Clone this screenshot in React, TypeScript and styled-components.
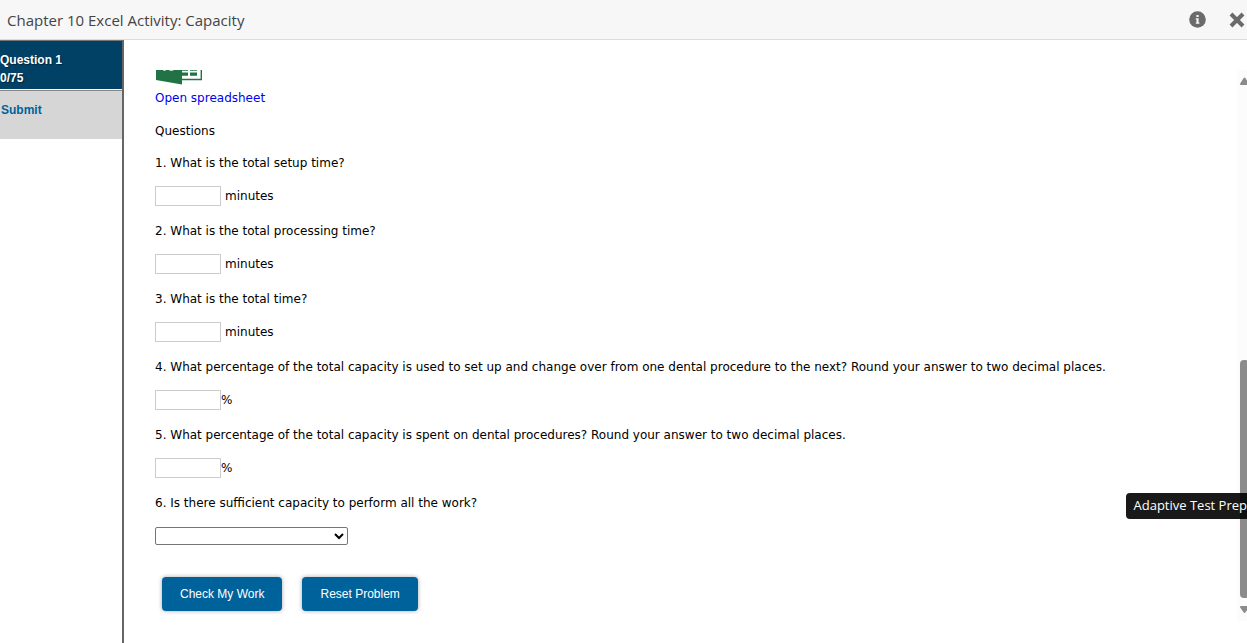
import React from "react";
import styled, { createGlobalStyle } from "styled-components";

const GlobalStyle = createGlobalStyle`
  *, *::before, *::after { box-sizing: border-box; }
  html, body, #root { height: 100%; }
  body { margin: 0; overflow: hidden; background: #fff; color: #000; }
`;

const Page = styled.div`
  display: flex;
  flex-direction: column;
  height: 100%;
  overflow: hidden;
`;

const TopBar = styled.header`
  display: flex;
  align-items: center;
  justify-content: space-between;
  height: 40px;
  flex: none;
  padding-left: 7px;
  padding-right: 2px;
  background: #f7f7f7;
  border-bottom: 1px solid #dcdcdc;
`;

const Title = styled.h1`
  margin: 0;
  font: 400 15px/20px "Open Sans", sans-serif;
  color: #444;
`;

const Tools = styled.div`
  display: flex;
  align-items: center;
  gap: 23px;
`;

const IconButton = styled.button`
  display: flex;
  padding: 0;
  border: 0;
  background: none;
  color: #6b6b6b;
`;

const Body = styled.div`
  display: flex;
  flex: 1;
  min-height: 0;
`;

const Sidebar = styled.nav`
  width: 124px;
  flex: none;
  border-right: 2px solid #666;
  font: 700 12px/18px "Liberation Sans", Arial, sans-serif;
`;

const QuestionItem = styled.a`
  display: block;
  height: 50px;
  padding-top: 10px;
  border-top: 1px solid #777;
  border-bottom: 1px solid #fff;
  background: #004165;
  color: #fff;
  text-decoration: none;
  text-shadow: 1px 1px 1px #00263c;
`;

const SubmitItem = styled.a`
  display: block;
  height: 49px;
  padding: 10px 1px;
  border-top: 1px solid #888;
  background: #d6d6d6;
  color: #00629b;
  text-decoration: none;
`;

const Main = styled.main`
  display: flex;
  flex: 1;
  min-width: 0;
  margin: 30px -5px 22px 0;
`;

const Content = styled.div`
  flex: 1;
  min-width: 0;
  padding-left: 31px;
  overflow: hidden;
  font: 400 12px/16px "DejaVu Sans", Verdana, sans-serif;
`;

const SheetLink = styled.a`
  display: block;
  width: max-content;
  color: #0000ee;
  text-decoration: none;

  svg { display: block; margin-bottom: 5px; }
`;

const Heading = styled.h2`
  margin: 17px 0 16px;
  font: inherit;
`;

const Question = styled.div`
  margin-bottom: 17px;
`;

const Prompt = styled.label`
  display: block;
  margin-bottom: 15px;
`;

const AnswerRow = styled.div<{ $gap?: number }>`
  display: flex;
  align-items: center;
  height: 20px;
  gap: ${(p) => p.$gap ?? 0}px;
`;

const AnswerInput = styled.input`
  width: 66px;
  height: 20px;
  padding: 1px 2px;
  border: 1px solid #ccc;
  background: #fff;
  font: inherit;
`;

const AnswerSelect = styled.select`
  width: 193px;
  height: 18px;
  border: 1px solid #767676;
  border-radius: 2px;
  background: #fff;
  font: inherit;
`;

const Actions = styled.div`
  display: flex;
  gap: 20px;
  margin: 31px 0 0 7px;
`;

const ActionButton = styled.button`
  height: 34px;
  padding: 0 18px;
  border: 0;
  border-radius: 4px;
  background: #00629b;
  color: #fff;
  font: 400 12px/16px "Liberation Sans", Arial, sans-serif;
  box-shadow: 0 0 4px rgba(0, 0, 0, 0.35);
`;

const ScrollTrack = styled.div`
  display: flex;
  flex-direction: column;
  align-items: center;
  width: 15px;
  flex: none;
  padding: 7px 0;
  background: #fcfcfc;
  color: #8b8b8b;
`;

const Thumb = styled.div`
  width: 9px;
  flex: 238;
  border-radius: 4px;
  background: #8b8b8b;
`;

const TrackSpace = styled.div<{ $grow: number }>`
  flex: ${(p) => p.$grow};
`;

const Tooltip = styled.div`
  position: absolute;
  right: 0;
  top: 493px;
  padding: 2px 0 4px 8px;
  border-radius: 4px 0 0 4px;
  background: rgba(0, 0, 0, 0.9);
  color: #fff;
  font: 400 13px/20px "Open Sans", sans-serif;
  white-space: nowrap;
`;

const QUESTIONS = [
  { text: "1. What is the total setup time?", unit: "minutes" },
  { text: "2. What is the total processing time?", unit: "minutes" },
  { text: "3. What is the total time?", unit: "minutes" },
  {
    text: "4. What percentage of the total capacity is used to set up and change over from one dental procedure to the next? Round your answer to two decimal places.",
    unit: "%",
  },
  {
    text: "5. What percentage of the total capacity is spent on dental procedures? Round your answer to two decimal places.",
    unit: "%",
  },
];

export default function App() {
  return (
    <Page>
      <GlobalStyle />
      <TopBar>
        <Title>Chapter 10 Excel Activity: Capacity</Title>
        <Tools>
          <IconButton aria-label="Information">
            <svg width="17" height="17" viewBox="0 0 17 17">
              <circle cx="8.5" cy="8.5" r="8.3" fill="currentColor" />
              <path d="M7.4 4h2.2v2H7.4zM6.8 7.2h2.8v4.3h.8v1.3H6.8v-1.3h.7V8.5h-.7z" fill="#f7f7f7" />
            </svg>
          </IconButton>
          <IconButton aria-label="Close">
            <svg width="16" height="16" viewBox="0 0 16 16">
              <path d="M2 2l12 12M14 2L2 14" stroke="currentColor" strokeWidth="4" />
            </svg>
          </IconButton>
        </Tools>
      </TopBar>
      <Body>
        <Sidebar>
          <QuestionItem href="#question-1">
            Question 1<br />
            0/75
          </QuestionItem>
          <SubmitItem href="#submit">Submit</SubmitItem>
        </Sidebar>
        <Main>
          <Content>
            <SheetLink href="#spreadsheet">
              <svg width="48" height="15" viewBox="0 0 48 15">
                <path d="M46.3 0v9.5H26" fill="none" stroke="#217346" strokeWidth="1.4" />
                <path d="M27 0h6v.8h-6zM35 0h7v.8h-7zM27 2.4h6v3.4h-6zM35 2.4h7v3.4h-7z" fill="#217346" />
                <path d="M1 0h26v14.5L1 10z" fill="#217346" />
                <path d="M8 0h3l-.6 1H8.500zM14 0h4l.4 1h-3.600z" fill="#b5d3c1" />
              </svg>
              Open spreadsheet
            </SheetLink>
            <Heading>Questions</Heading>
            {QUESTIONS.map((q, i) => (
              <Question key={q.text}>
                <Prompt htmlFor={`answer-${i + 1}`}>{q.text}</Prompt>
                <AnswerRow $gap={q.unit === "%" ? 0 : 4}>
                  <AnswerInput id={`answer-${i + 1}`} type="text" />
                  <span>{q.unit}</span>
                </AnswerRow>
              </Question>
            ))}
            <Prompt htmlFor="answer-6">6. Is there sufficient capacity to perform all the work?</Prompt>
            <AnswerRow>
              <AnswerSelect id="answer-6" defaultValue="">
                <option value=""></option>
                <option value="yes">Yes</option>
                <option value="no">No</option>
              </AnswerSelect>
            </AnswerRow>
            <Actions>
              <ActionButton type="button">Check My Work</ActionButton>
              <ActionButton type="button">Reset Problem</ActionButton>
            </Actions>
          </Content>
          <ScrollTrack aria-hidden="true">
            <svg width="9" height="8" viewBox="0 0 9 8">
              <path d="M4.5 1.500L8 7H1z" fill="currentColor" stroke="currentColor" strokeWidth="2" strokeLinejoin="round" />
            </svg>
            <TrackSpace $grow={275} />
            <Thumb />
            <TrackSpace $grow={8} />
            <svg width="9" height="8" viewBox="0 0 9 8">
              <path d="M4.5 6L8 1H1z" fill="currentColor" stroke="currentColor" strokeWidth="2" strokeLinejoin="round" />
            </svg>
          </ScrollTrack>
        </Main>
      </Body>
      <Tooltip role="tooltip">Adaptive Test Prep</Tooltip>
    </Page>
  );
}
